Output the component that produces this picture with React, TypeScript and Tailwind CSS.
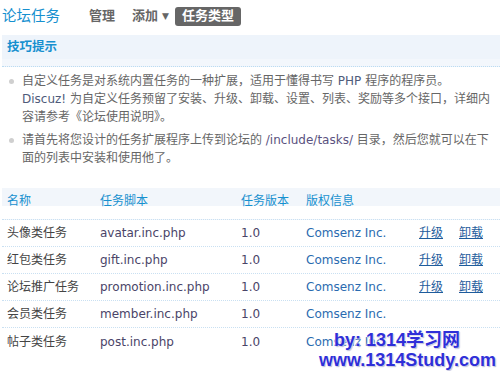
const font = "font-['DejaVu_Sans','Noto_Sans_CJK_SC',sans-serif]";

const rows = [
  { name: "头像类任务", script: "avatar.inc.php", ops: true },
  { name: "红包类任务", script: "gift.inc.php", ops: true },
  { name: "论坛推广任务", script: "promotion.inc.php", ops: true },
  { name: "会员类任务", script: "member.inc.php", ops: false },
  { name: "帖子类任务", script: "post.inc.php", ops: false },
];

const cols = "grid grid-cols-[93px_141px_65px_113px_40px_1fr] pl-[5px]";

export default function App() {
  return (
    <div className={`relative w-[500px] h-[371px] overflow-hidden bg-white text-[12px] ${font}`}>
      {/* top nav */}
      <div className="flex items-center h-[33px] pl-[2px] pb-[1px]">
        <h1 className="text-[14.5px] leading-none text-[#1690cf] w-[87px]">论坛任务</h1>
        <span className="font-bold text-[13px] text-[#666] mr-[17px]">管理</span>
        <span className="font-bold text-[13px] text-[#666] mr-[6px]">
          添加<span className="text-[9px] ml-[4px] align-[1px]">▼</span>
        </span>
        <span className="font-bold text-[13px] text-white bg-[#666] rounded-[3px] h-[19px] px-[7px] flex items-center">
          任务类型
        </span>
      </div>

      {/* tips */}
      <div className="ml-[2px] mt-[2px] bg-[linear-gradient(#eef4fb_24px,#f3f7fc_24px)] h-[32px] border-b border-dotted border-[#bcdcf2]">
        <div className="h-[24px] flex items-center pl-[5px] font-bold text-[#1690cf] text-[12.5px]">技巧提示</div>
      </div>
      <ul className="pl-[22px] pr-[8px] pt-[5px] text-[#666] leading-[18px] text-[12px]">
        <li className="relative mb-[5px]">
          <span className="absolute left-[-13px] top-[7px] w-[5px] h-[5px] rounded-full bg-[#cfcfcf]" />
          自定义任务是对系统内置任务的一种扩展，适用于懂得书写 <span className="text-[#4f5b7a]">PHP</span> 程序的程序员。
          <br />
          <span className="text-[#4f5b7a]">Discuz!</span> 为自定义任务预留了安装、升级、卸载、设置、列表、奖励等多个接口，详细内容请参考《论坛使用说明》。
        </li>
        <li className="relative">
          <span className="absolute left-[-13px] top-[7px] w-[5px] h-[5px] rounded-full bg-[#cfcfcf]" />
          请首先将您设计的任务扩展程序上传到论坛的 <span className="text-[#5a5280]">/include/tasks/</span> 目录，然后您就可以在下面的列表中安装和使用他了。
        </li>
      </ul>

      {/* table */}
      <div className="ml-[2px] mt-[21px]">
        <div className={`${cols} h-[32px] items-end pb-[9px] text-[#1690cf] bg-[linear-gradient(#f2f6fb_18px,transparent_18px)] border-b border-dotted border-[#c9e0f2]`}>
          <span>名称</span>
          <span>任务脚本</span>
          <span>任务版本</span>
          <span>版权信息</span>
          <span />
          <span />
        </div>
        {rows.map((r, i) => (
          <div
            key={r.script}
            className={`${cols} h-[27px] items-center ${i < rows.length - 1 ? "border-b border-dotted border-[#c9e0f2]" : ""}`}
          >
            <span className="text-[#444]">{r.name}</span>
            <span className="text-[#4a4468]">{r.script}</span>
            <span className="text-[#4a4468]">1.0</span>
            <span className="text-[#2a6bb0]">Comsenz Inc.</span>
            {r.ops ? (
              <>
                <a className="text-[#1e5c9c] underline">升级</a>
                <a className="text-[#1e5c9c] underline">卸载</a>
              </>
            ) : (
              <>
                <span />
                <span />
              </>
            )}
          </div>
        ))}
      </div>

      {/* watermark */}
      <div className="absolute right-[4px] bottom-[1px] font-['Liberation_Sans','Noto_Sans_CJK_SC',sans-serif] font-bold text-[18px] leading-[20px] text-[#2f2fd8] [text-shadow:0_0_2px_#fff,0_0_3px_#fff,1px_1px_1px_#9a9ac8]">
        <div className="pl-[15px]">by: 1314学习网</div>
        <div>www.1314Study.com</div>
      </div>
    </div>
  );
}
